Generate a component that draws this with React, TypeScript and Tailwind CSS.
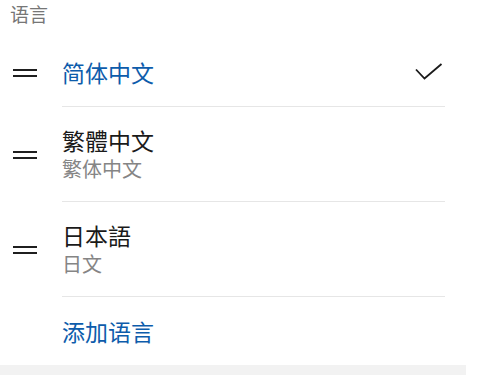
const font = { fontFamily: '"Noto Sans CJK SC", "Noto Sans", sans-serif' };

type Lang = {
  title: string;
  subtitle?: string;
  selected?: boolean;
};

const languages: Lang[] = [
  { title: "简体中文", selected: true },
  { title: "繁體中文", subtitle: "繁体中文" },
  { title: "日本語", subtitle: "日文" },
];

function DragHandle() {
  return (
    <div className="flex w-[62px] shrink-0 flex-col gap-[4px] pl-[13px]">
      <span className="block h-[2px] w-[24px] bg-[#1f1f1f]" />
      <span className="block h-[2px] w-[24px] bg-[#1f1f1f]" />
    </div>
  );
}

function Check() {
  return (
    <svg width="28" height="18" viewBox="0 0 28 18" fill="none" className="mr-[2px]">
      <path d="M1 6.5L9.5 15.5L26.5 1" stroke="#1a1a1a" strokeWidth="1.8" />
    </svg>
  );
}

function LangRow({ lang }: { lang: Lang }) {
  const tall = !!lang.subtitle;
  return (
    <div className={`flex items-center ${tall ? "h-[95px]" : "h-[69px]"}`}>
      <DragHandle />
      <div className="mr-[21px] flex h-full flex-1 items-center justify-between border-b border-[#e6e6e6]">
        <div className="flex flex-col">
          <span
            className={`text-[23px] leading-[30px] ${lang.selected ? "text-[#0d5cab]" : "text-[#1a1a1a]"}`}
          >
            {lang.title}
          </span>
          {lang.subtitle && (
            <span className="text-[20px] leading-[28px] text-[#858585]">{lang.subtitle}</span>
          )}
        </div>
        {lang.selected && <Check />}
      </div>
    </div>
  );
}

export default function App() {
  return (
    <div className="h-[375px] w-[477px] overflow-hidden bg-white" style={font}>
      <div className="w-[466px]">
        <div className="h-[38px] pl-[10px] text-[19px] leading-[27px] text-[#767676]">语言</div>
        {languages.map((l) => (
          <LangRow key={l.title} lang={l} />
        ))}
        <div className="flex h-[68px] items-center pl-[62px]">
          <span className="text-[23px] leading-[30px] text-[#0d5cab]">添加语言</span>
        </div>
        <div className="h-[10px] bg-[#f2f2f2]" />
      </div>
    </div>
  );
}
